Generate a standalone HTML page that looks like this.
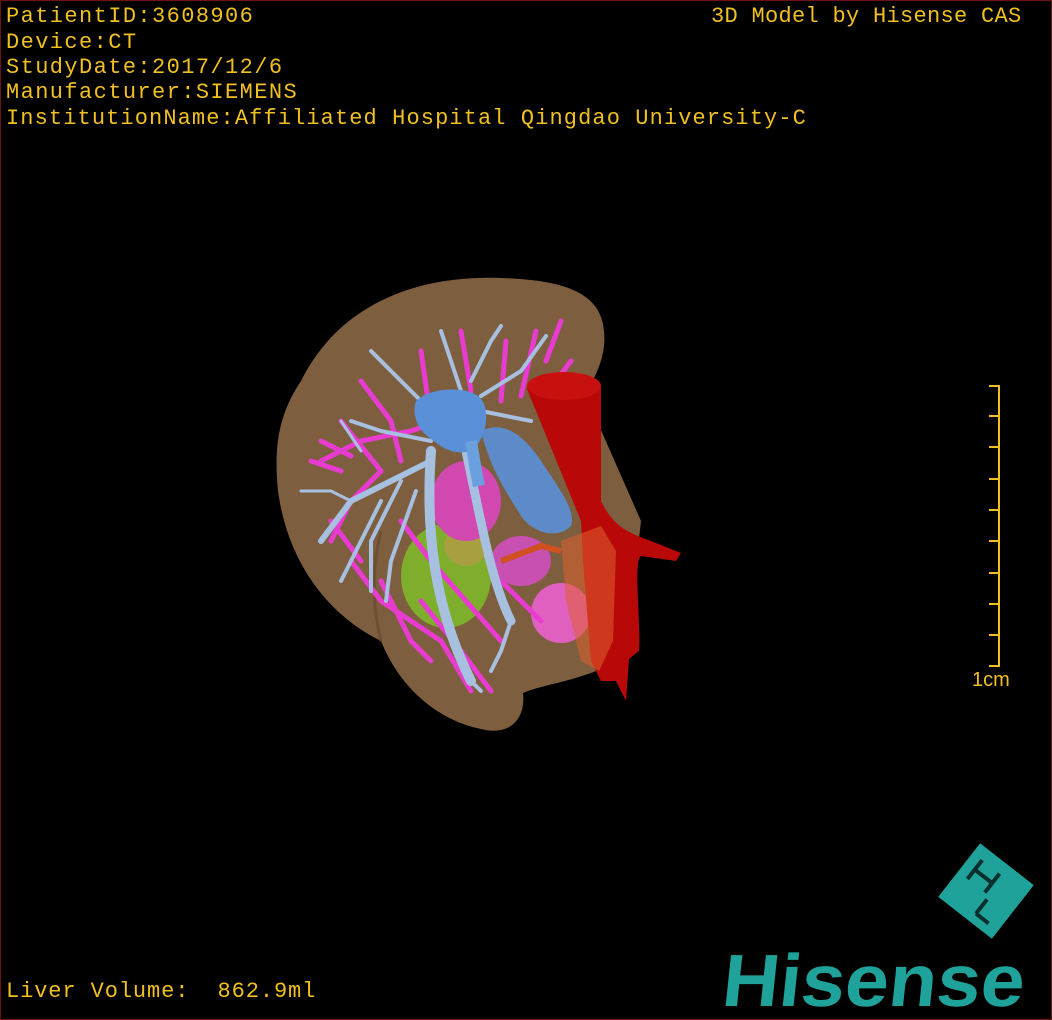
<!DOCTYPE html>
<html><head><meta charset="utf-8"><style>
html,body{margin:0;padding:0;background:#000;}
#v{position:relative;width:1050px;height:1018px;border:1px solid #6e1212;overflow:hidden;background:#000;}
.t{position:absolute;left:5px;color:#f0c020;font-family:"Liberation Mono",monospace;font-size:22px;letter-spacing:1.4px;white-space:pre;line-height:24px;}
</style></head><body><div id="v">
<div class="t" style="top:4px">PatientID:3608906</div>
<div class="t" style="top:30px">Device:CT</div>
<div class="t" style="top:55px">StudyDate:2017/12/6</div>
<div class="t" style="top:80px">Manufacturer:SIEMENS</div>
<div class="t" style="top:106px;letter-spacing:1.1px">InstitutionName:Affiliated Hospital Qingdao University-C</div>
<div class="t" style="top:4px;left:710px;letter-spacing:0.3px">3D Model by Hisense CAS</div>
<div class="t" style="top:979px;letter-spacing:0.9px">Liver Volume:  862.9ml</div>
<div class="t" style="top:667px;left:971px;font-family:'Liberation Sans',sans-serif;font-size:20px;letter-spacing:0">1cm</div>
<svg width="1050" height="1018" style="position:absolute;left:0;top:0">
<g stroke="#f0c020" stroke-width="2" fill="none">
<path d="M998 384V666"/>
<path d="M988 385H999M988 415H999M988 446H999M988 478H999M988 509H999M988 540H999M988 572H999M988 603H999M988 634H999M988 665H999"/>
</g>
<!-- liver -->
<path d="M300 380C340 300 420 274 500 277C560 279 600 290 603 330C606 360 590 380 585 395L640 520L625 655C585 680 545 682 522 692C525 716 510 736 480 728C440 720 400 690 380 640C335 618 288 570 277 490C272 440 280 410 300 380Z" fill="#7d5e3e"/>
<path d="M380 640C370 600 372 560 380 530" stroke="#6d5034" stroke-width="3" fill="none"/>
<!-- green -->
<ellipse cx="445" cy="575" rx="45" ry="52" fill="#7fae2c"/>
<ellipse cx="465" cy="545" rx="22" ry="20" fill="#a8a040"/>
<!-- pink masses -->
<ellipse cx="465" cy="500" rx="35" ry="40" fill="#d048b0"/>
<ellipse cx="560" cy="612" rx="30" ry="30" fill="#e060c0"/>
<ellipse cx="520" cy="560" rx="30" ry="25" fill="#c850b0"/>
<!-- pink vessels -->
<g stroke="#e83cd0" stroke-width="5" fill="none" stroke-linecap="round">
<path d="M320 460L360 440L410 430L440 420"/><path d="M330 540L350 500L380 470"/>
<path d="M340 420L380 470M360 380L390 420L400 460M420 350L430 420M460 330L470 390M505 340L500 400M535 330L520 395M560 320L545 360"/>
<path d="M350 560L380 600L440 640L470 690M330 520L360 560M400 520L430 560L500 640"/>
<path d="M420 600L460 650L490 690M500 580L540 620M380 580L410 640L430 660"/>
<path d="M310 460L340 470M320 440L350 455M570 360L540 400M590 420L560 440"/>
</g>
<!-- light blue portal -->
<g stroke="#a8c0e0" fill="none" stroke-linecap="round">
<path d="M430 450C425 520 430 600 470 680" stroke-width="10"/>
<path d="M465 450C480 520 490 580 510 620" stroke-width="9"/>
<path d="M430 460L390 480L350 500L320 540" stroke-width="6"/>
<path d="M400 480L370 540L370 590M380 500L350 560L340 580M415 490L390 560L385 600" stroke-width="4"/>
<path d="M510 620L500 650L490 670M470 680L480 690" stroke-width="4"/>
<path d="M430 440L380 430L350 420M420 400L390 370L370 350M460 390L450 360L440 330M470 380L490 340L500 325M480 395L520 370L545 335M480 410L530 420" stroke-width="4"/>
<path d="M350 500L330 490L300 490M360 450L340 420" stroke-width="3"/>
</g>
<!-- blue hepatic -->
<path d="M415 400C430 385 470 385 480 398C490 410 485 440 470 450C450 455 440 445 430 438C418 430 410 415 415 400Z" fill="#5a90d8"/>
<path d="M480 430C500 420 520 430 540 460C560 490 575 510 570 525C555 540 530 530 520 515C505 490 490 470 480 430Z" fill="#5a90d8" opacity="0.9"/>
<path d="M470 440L475 470L478 485" stroke="#6aa0e0" stroke-width="12" fill="none"/>
<!-- red IVC -->
<path d="M526 388C530 372 595 370 600 386L600 500C610 520 620 530 650 540L680 552L675 560L640 555C632 560 640 620 638 650L628 658L625 700L615 680L600 680L590 660L582 560L580 520Z" fill="#b80808"/>
<ellipse cx="563" cy="385" rx="37" ry="14" fill="#c81010"/>
<!-- orange translucent -->
<path d="M560 540L600 525L615 550L612 640L598 670L580 660L565 600Z" fill="#e06030" opacity="0.55"/>
<path d="M500 560L540 545L560 550" stroke="#d05020" stroke-width="6" fill="none"/>
<!-- logo cube -->
<g transform="translate(985 890) rotate(38)">
<rect x="-34" y="-34" width="68" height="68" fill="#1fa29a"/>
<path d="M-22 -22V2M-22 -10H0M0 -22V2M6 6V24M6 24H22" stroke="#06302e" stroke-width="4" fill="none"/>
</g>
<text x="720" y="1005" font-family="Liberation Sans,sans-serif" font-weight="bold" font-size="74" fill="#1fa29a" textLength="302" lengthAdjust="spacingAndGlyphs" transform="skewX(-6) translate(105 0)">Hisense</text>
</svg>
</div></body></html>
